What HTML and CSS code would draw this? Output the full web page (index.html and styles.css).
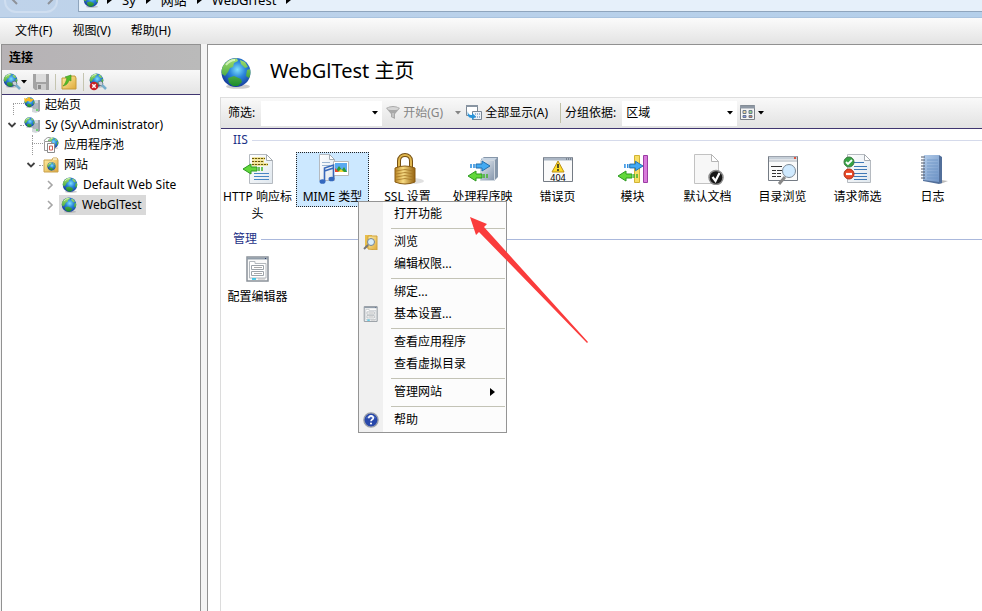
FILE: index.html
```html
<!DOCTYPE html>
<html lang="zh-CN">
<head>
<meta charset="utf-8">
<title>WebGlTest 主页</title>
<link rel="stylesheet" href="styles.css">
</head>
<body>
<svg class="sprite" aria-hidden="true">
  <defs>
    <radialGradient id="g-sea" cx=".55" cy=".4" r=".6"><stop offset="0" stop-color="#7fe0fb"/><stop offset=".45" stop-color="#2b86dc"/><stop offset="1" stop-color="#173d9c"/></radialGradient>
    <linearGradient id="g-land" x2="0" y2="1"><stop offset="0" stop-color="#a4e070"/><stop offset="1" stop-color="#1b8c2c"/></linearGradient>
    <linearGradient id="g-page" x2="1" y2="1"><stop offset="0" stop-color="#fff"/><stop offset="1" stop-color="#dfe7ee"/></linearGradient>
    <linearGradient id="g-folder" x2="1" y2="1"><stop offset="0" stop-color="#fff0a8"/><stop offset="1" stop-color="#dfa93a"/></linearGradient>
    <linearGradient id="g-gold" x2="1"><stop offset="0" stop-color="#b98422"/><stop offset=".4" stop-color="#f8dc84"/><stop offset="1" stop-color="#94600c"/></linearGradient>
    <linearGradient id="g-book" x2="1" y2="1"><stop offset="0" stop-color="#b4cdea"/><stop offset="1" stop-color="#6f94c6"/></linearGradient>
    <linearGradient id="g-metal" x2="1" y2="1"><stop offset="0" stop-color="#e9eff5"/><stop offset="1" stop-color="#8495ab"/></linearGradient>
  </defs>
  <symbol id="globe" viewBox="0 0 32 32">
    <ellipse cx="18" cy="29.500" rx="12" ry="2.300" fill="#999" opacity=".5"/>
    <circle cx="16" cy="15.500" r="14.500" fill="url(#g-sea)"/>
    <path d="M3 9C6 4 11 1 17 1.500L18 4l-4 2-1 4-3 1-2 4-3 4-3-2C1 14 2 11 3 9zM20 3l5 2 3 5-3 1-4-4zM27 13l3-1c1 4 0 7-1 9l-3-2zM8 21l6-2 7 3 1 3-4 4-5 0-4-3z" fill="url(#g-land)"/>
    <path d="M6 8q4-5 9-5" stroke="#e9ffd9" stroke-width="2" fill="none" opacity=".7"/>
  </symbol>
  <symbol id="server" viewBox="0 0 16 16">
    <path d="M8 4l3-1h5v11l-4 2-4-1z" fill="#d3d7dc"/><path d="M14 3h2v11l-2 1z" fill="#9aa2ab"/><path d="M9 7h5M9 9h5M9 11h5" stroke="#7e8893" stroke-width=".8"/>
    <circle cx="13" cy="13" r="1" fill="#50d050"/>
    <use href="#globe" width="11" height="11"/>
  </symbol>
  <symbol id="start" viewBox="0 0 16 16"><use href="#server"/><path d="M0 1l3 1 2-2 2 2 3 0-2 2-1 1-3-1-3 1z" fill="#f9b61d"/></symbol>
  <symbol id="connect" viewBox="0 0 18 18"><use href="#globe" width="15" height="15"/><path d="M9 9l3-1 2 2-1 3-3-1z" fill="#c7d0d8" stroke="#5b6c79" stroke-width=".7"/><path d="M13 12l4 4" stroke="#77aecd" stroke-width="2.500"/></symbol>
  <symbol id="disconnect" viewBox="0 0 18 18"><use href="#connect"/><circle cx="5" cy="13" r="4.300" fill="#c82126"/><path d="M3.300 11.300l3.400 3.400m0-3.400l-3.400 3.400" stroke="#fff" stroke-width="1.500"/></symbol>
  <symbol id="save" viewBox="0 0 16 16"><path d="M0 0h16v16H2l-2-2z" fill="#a3a3a3"/><path d="M3 0h10v8H3z" fill="#dcdcdc"/><path d="M4 10h9v6H4z" fill="#ccc"/><path d="M5 11h3v4H5z" fill="#8b8b8b"/></symbol>
  <symbol id="folder-up" viewBox="0 0 16 16"><path d="M1 4h8l1-2h4l1 2v11H1z" fill="url(#g-folder)" stroke="#c49a39"/><path d="M2 12c4-1 5-3 6-6l2 1 0-6-6 2 2 1c-1 4-2 6-4 8z" fill="#54bd28" stroke="#3b9420" stroke-width=".6"/></symbol>
  <symbol id="pool" viewBox="0 0 16 16"><use href="#globe" x="4" width="12" height="12"/><path d="M1.500 4.500h7v9h-7z" fill="#fff" stroke="#999"/><path d="M4.500 6.500h7v9h-7z" fill="#fff" stroke="#8b8b8b"/><path d="M6.500 9h3v4h-3z" stroke="#cc5d55" fill="none"/><path d="M1 4q3-5 7-3" fill="none" stroke="#999"/></symbol>
  <symbol id="sites" viewBox="0 0 16 16"><path d="M1 3h8l1-2h4l1 2v12H1z" fill="url(#g-folder)" stroke="#caa14c"/><path d="M10 2h4" stroke="#fff"/><use href="#globe" x="4" y="5" width="9" height="9"/></symbol>
  <symbol id="down" viewBox="0 0 6 4"><path d="M0 0h6L3 3.500z" fill="currentColor"/></symbol>
  <symbol id="right" viewBox="0 0 5 8"><path d="M0 0l5 4-5 4z" fill="currentColor"/></symbol>
  <symbol id="open" viewBox="0 0 10 10"><path d="M1.500 3L5 6.500 8.500 3" fill="none" stroke="#404040" stroke-width="1.800"/></symbol>
  <symbol id="closed" viewBox="0 0 10 10"><path d="M3 1l4 4-4 4" fill="none" stroke="#a6a6a6" stroke-width="1.600"/></symbol>
  <symbol id="funnel" viewBox="0 0 14 14"><path d="M0 2q7-4 14 0L9 8v5l-4-2V8z" fill="#a8a8a8"/><ellipse cx="7" cy="2.500" rx="5.500" ry="1.500" fill="#d6d6d6"/><path d="M7 7v4" stroke="#ddd"/></symbol>
  <symbol id="showall" viewBox="0 0 16 16"><path d="M.5.500h11v10H.5z" fill="#fff" stroke="#7c8794"/><path d="M0 1h12" stroke="#8995a2" stroke-width="2"/><path d="M6.500 6.500h9v8h-9z" fill="#eef2f7" stroke="#7c8794"/><path d="M9 9h1m1 0h1m1 0h1M9 12h1m1 0h1m1 0h1" stroke="#527dad"/><path d="M2 6c0 3 1 4 4 4V8l4 3.500L6 15v-2C2 13 1 10 2 6z" fill="#2a93d8"/></symbol>
  <symbol id="views" viewBox="0 0 16 16"><path d="M.5.500h14v14H.5z" fill="#f5f5f5" stroke="#7a8188"/><path d="M0 2h15" stroke="#8e98a4" stroke-width="3"/><path d="M3 5.500h3v3H3z" fill="#f0d8a0" stroke="#697b8d"/><path d="M9 5.500h3v3H9z" fill="#9cd48b" stroke="#697b8d"/><path d="M3 10.500h3v2H3z" fill="#8890f0" stroke="#697b8d"/><path d="M9 10.500h3v2H9z" fill="#e87c50" stroke="#697b8d"/></symbol>
  <symbol id="page" viewBox="0 0 32 32"><path d="M7.500 1.500h17l6 6v23h-23z" fill="url(#g-page)" stroke="#b5bac0"/><path d="M24.500 1.500v6h6z" fill="#fff" stroke="#a5abb1"/></symbol>
  <symbol id="arrow-l" viewBox="0 0 22 12"><path d="M1 6l8-5v3h6v4H9v3z" fill="#62d83b" stroke="#2c9a20"/><path d="M17 4v4m3-4v4" stroke="#42b52b" stroke-width="1.500"/></symbol>
  <symbol id="arrow-r" viewBox="0 0 22 12"><path d="M21 6l-8-5v3H7v4h6v3z" fill="#42aaf2" stroke="#206eae"/><path d="M5 4v4M2 4v4" stroke="#238ae0" stroke-width="1.500"/></symbol>
  <symbol id="http" viewBox="0 0 32 32"><use href="#page"/><path d="M10 5.500h13M10 8.500h12M10 11.500h16" stroke="#ecd451" stroke-width="2"/><path d="M10 5.500h13M10 8.500h12M10 11.500h16" stroke="#665611" stroke-dasharray="2 1"/><path d="M12 20.500h15M12 23.500h15M12 26.500h15" stroke="#4685c4"/><use href="#arrow-l" x="0" y="10" width="22" height="12"/></symbol>
  <symbol id="mime" viewBox="0 0 32 32"><path d="M2.500 1.500h10l5 5v21h-15z" fill="url(#g-page)" stroke="#b5bac0"/><path d="M12.500 1.500v5h5z" fill="#fff" stroke="#a5abb1"/><path d="M5 9.500h8M5 12.500h8" stroke="#9bb5d1"/><path d="M16.500 8.500h15v14h-15z" fill="#fff" stroke="#b8b8b8"/><path d="M18 10h12v9H18z" fill="#5aaaf0"/><path d="M18 19l4-6 3 4 2-3 3 5z" fill="#2d9a35"/><path d="M18 15l4 4h-4z" fill="#e9472c"/><path d="M24 16l3 3h-6z" fill="#f1d437"/><path d="M7.500 28V15l9-3v14M7.500 18l9-3" fill="none" stroke="#3768bb" stroke-width="1.600"/><ellipse cx="5.500" cy="28.500" rx="3" ry="2.300" fill="#3468be"/><ellipse cx="14.500" cy="26" rx="3" ry="2.300" fill="#3468be"/></symbol>
  <symbol id="lock" viewBox="0 0 32 32"><ellipse cx="20" cy="28" rx="12" ry="3" fill="#ccc" opacity=".6"/><path d="M7 16V8c0-8 12-8 12 0v8" fill="none" stroke="#765013" stroke-width="4"/><path d="M7 16V8c0-8 12-8 12 0v8" fill="none" stroke="#dfb64e" stroke-width="2"/><path d="M3 15q10-4 20 0v14q-10 4-20 0z" fill="url(#g-gold)" stroke="#8a5d14"/><path d="M4 18q9-3 18 0M4 21q9-3 18 0M4 24q9-3 18 0M4 27q9-3 18 0" fill="none" stroke="#a57625" stroke-width=".8"/></symbol>
  <symbol id="handler" viewBox="0 0 32 32"><path d="M14 6l3-2h14v20l-4 4H14z" fill="#8697aa"/><path d="M15 5h15l-3 3H14z" fill="#c7d4e2"/><path d="M13.500 7.500h14v20h-14z" fill="url(#g-metal)" stroke="#cfd7df"/><use href="#arrow-r" x="2" y="7" width="22" height="12"/><use href="#arrow-l" y="17" width="22" height="12"/></symbol>
  <symbol id="error" viewBox="0 0 32 32"><path d="M1.500 4.500h29v24h-29z" fill="#fafafa" stroke="#747b84"/><path d="M2 6h28" stroke="#abb6c4" stroke-width="3"/><path d="M24 6h1m1 0h1m1 0h1" stroke="#48505d"/><path d="M16 8l6 11H10z" fill="#ffdd29" stroke="#bd9116"/><path d="M16 11v4m0 1v2" stroke="#222" stroke-width="1.500"/><text x="16" y="28" class="code">404</text></symbol>
  <symbol id="module" viewBox="0 0 32 32"><path d="M17.500 2.500h5v27h-5z" fill="#f7df65" stroke="#d2b334"/><path d="M26.500 2.500h4v27h-4z" fill="#d97bdb" stroke="#9b3da4"/><use href="#arrow-r" x="6" y="7" width="21" height="12"/><use href="#arrow-l" y="17" width="22" height="12"/></symbol>
  <symbol id="doc" viewBox="0 0 32 32"><path d="M2.500 1.500h17l7 7v22h-24z" fill="#f7f7f7" stroke="#c2c2c2"/><path d="M19.500 1.500v7h7z" fill="#fff" stroke="#b5b5b5"/><circle cx="24" cy="24.500" r="7" fill="#181818" stroke="#8d8d8d" stroke-width="1.500"/><path d="M20.500 24l3 4 4-8" fill="none" stroke="#fff" stroke-width="2.200"/></symbol>
  <symbol id="browse" viewBox="0 0 32 32"><path d="M1.500 3.500h29v24h-29z" fill="#fafafa" stroke="#747b84"/><path d="M2 5h28" stroke="#c6cfd8" stroke-width="3"/><path d="M2 8h28" stroke="#a6afb9"/><path d="M4 13.500h11M5 17.500h4m1 0h5M5 20.500h4m1 0h4M5 23.500h4m1 0h4" stroke="#333"/><path d="M18 24l-6 7" stroke="#888" stroke-width="3"/><circle cx="22" cy="18" r="6.500" fill="#d0eaff" stroke="#7d8a96"/><path d="M27 5h2" stroke="#de523c" stroke-width="2"/></symbol>
  <symbol id="request" viewBox="0 0 32 32"><path d="M5.500 1.500h17l6 6v22h-23z" fill="url(#g-page)" stroke="#b5bac0"/><path d="M22.500 1.500v6h6z" fill="#fff" stroke="#a5abb1"/><path d="M12 9.500h10M12 13.500h13M12 16.500h13M12 20.500h13M12 23.500h13M12 26.500h13" stroke="#3f79b6"/><circle cx="7" cy="9" r="5" fill="#36a444" stroke="#3b7841"/><path d="M4 9l2 2 4-4" stroke="#fff" stroke-width="1.800" fill="none"/><circle cx="7" cy="21" r="5" fill="#e94825" stroke="#ae321a"/><path d="M4 21h6" stroke="#fff" stroke-width="2.200"/></symbol>
  <symbol id="log" viewBox="0 0 32 32"><path d="M24 27l7 1-8 3z" fill="#bbb"/><path d="M7 2h15l3 2v26l-3 1L6 28z" fill="#526f9a"/><path d="M7 2h15v27L6 27z" fill="url(#g-book)"/><path d="M10 7h11M10 10h11M10 13h11M10 16h11M10 19h11M10 22h11M10 25h11" stroke="#6d94c5" stroke-width=".8"/><path d="M4 4h4M4 7h4M4 10h4M4 13h4M4 16h4M4 19h4M4 22h4M4 25h4" stroke="#4c5564"/></symbol>
  <symbol id="config" viewBox="0 0 24 26"><path d="M1 1h21v24H1z" fill="#fafafa" stroke="#8a9199" stroke-width="1.500"/><path d="M1 2.500h21" stroke="#929eaa" stroke-width="2"/><path d="M3.500 22V5.500H9v2h11V22z" fill="#fff" stroke="#b3b8bd"/><path d="M5.500 9.500h12v4h-12zM5.500 15.500h12v4h-12z" fill="#fff" stroke="#9da3a9"/><path d="M8 11.500h8M8 17.500h8" stroke="#aaa"/><path d="M6 23h4" stroke="#16bce5" stroke-width="1.500"/><path d="M12 23h7" stroke="#bbb"/><path d="M19 2.500h1" stroke="#28396b"/></symbol>
  <symbol id="folder-find" viewBox="0 0 16 16"><path d="M2 1h7v13H2z" fill="#e8be4b"/><path d="M5 2h9v14l-9-1z" fill="url(#g-folder)" stroke="#d1a33c"/><path d="M5 11l-4 4" stroke="#777" stroke-width="2"/><circle cx="8" cy="8" r="3.500" fill="#d8edfa" stroke="#768593"/></symbol>
  <symbol id="help" viewBox="0 0 18 18"><circle cx="9" cy="9" r="8" fill="#2747aa" stroke="#9a9fa9" stroke-width="1.500"/><path d="M3 7q6-7 12 0" fill="#7696df" opacity=".6"/><path d="M6.500 7c0-4 5.500-3 5 0-.3 1.500-2.500 1.500-2.500 3.500" fill="none" stroke="#fff" stroke-width="1.800"/><circle cx="9" cy="13" r="1.200" fill="#fff"/></symbol>
</svg>

<header class="topbar">
  <div class="history">
    <button aria-label="后退"><svg viewBox="0 0 14 12"><path d="M7 1L2 6l5 5M2 6h11" fill="none" stroke="currentColor" stroke-width="2"/></svg></button>
    <button aria-label="前进"><svg viewBox="0 0 14 12"><path d="M7 1l5 5-5 5M12 6H1" fill="none" stroke="currentColor" stroke-width="2"/></svg></button>
  </div>
  <nav class="address">
    <svg class="i16"><use href="#globe"/></svg>
    <svg class="crumb"><use href="#right"/></svg><a href="#sy">Sy</a>
    <svg class="crumb"><use href="#right"/></svg><a href="#sites-list">网站</a>
    <svg class="crumb"><use href="#right"/></svg><a href="#site">WebGlTest</a>
    <svg class="crumb"><use href="#right"/></svg>
  </nav>
</header>
<nav class="menubar"><button>文件(F)</button><button>视图(V)</button><button>帮助(H)</button></nav>

<div class="workspace">
  <aside class="connections">
    <h2>连接</h2>
    <div class="tools">
      <button aria-label="连接"><svg class="i18"><use href="#connect"/></svg><svg class="caret"><use href="#down"/></svg></button>
      <button aria-label="保存" disabled><svg class="i16"><use href="#save"/></svg></button>
      <button class="divided" aria-label="向上"><svg class="i16"><use href="#folder-up"/></svg></button>
      <button class="divided" aria-label="断开连接"><svg class="i18"><use href="#disconnect"/></svg></button>
    </div>
    <ul class="tree">
      <li><div class="row"><span class="twig corner"></span><svg class="i16"><use href="#start"/></svg><span class="name">起始页</span></div></li>
      <li id="sy"><div class="row"><span class="twig stub"><svg><use href="#open"/></svg></span><svg class="i16"><use href="#server"/></svg><span class="name">Sy (Sy\Administrator)</span></div>
        <ul>
          <li><div class="row"><span class="twig tee"></span><svg class="i16"><use href="#pool"/></svg><span class="name">应用程序池</span></div></li>
          <li id="sites-list"><div class="row"><span class="twig stub"><svg><use href="#open"/></svg></span><svg class="i16"><use href="#sites"/></svg><span class="name">网站</span></div>
            <ul>
              <li><div class="row"><span class="twig"><svg><use href="#closed"/></svg></span><svg class="i16"><use href="#globe"/></svg><span class="name">Default Web Site</span></div></li>
              <li id="site"><div class="row"><span class="twig"><svg><use href="#closed"/></svg></span><span class="selected"><svg class="i16"><use href="#globe"/></svg><span class="name">WebGlTest</span></span></div></li>
            </ul>
          </li>
        </ul>
      </li>
    </ul>
  </aside>

  <main class="home">
    <div class="title"><svg><use href="#globe"/></svg><h1>WebGlTest 主页</h1></div>
    <div class="features">
      <div class="filterbar">
        <label for="filter">筛选:</label>
        <span class="combo"><input id="filter" type="text"><svg class="caret"><use href="#down"/></svg></span>
        <button class="go" disabled><svg class="i14"><use href="#funnel"/></svg>开始(G)<svg class="caret"><use href="#down"/></svg></button>
        <button class="all"><svg class="i16"><use href="#showall"/></svg>全部显示(A)</button>
        <label class="grouping" for="group">分组依据:</label>
        <span class="combo"><select id="group"><option>区域</option></select><svg class="caret"><use href="#down"/></svg></span>
        <button class="views" aria-label="视图"><svg class="i16"><use href="#views"/></svg><svg class="caret"><use href="#down"/></svg></button>
      </div>
      <section>
        <h3 class="pale">IIS</h3>
        <div class="grid">
          <button class="feature"><svg><use href="#http"/></svg><span>HTTP 响应标头</span></button>
          <button class="feature active"><svg><use href="#mime"/></svg><span>MIME 类型</span></button>
          <button class="feature"><svg><use href="#lock"/></svg><span>SSL 设置</span></button>
          <button class="feature"><svg><use href="#handler"/></svg><span>处理程序映射</span></button>
          <button class="feature"><svg><use href="#error"/></svg><span>错误页</span></button>
          <button class="feature"><svg><use href="#module"/></svg><span>模块</span></button>
          <button class="feature"><svg><use href="#doc"/></svg><span>默认文档</span></button>
          <button class="feature"><svg><use href="#browse"/></svg><span>目录浏览</span></button>
          <button class="feature"><svg><use href="#request"/></svg><span>请求筛选</span></button>
          <button class="feature"><svg><use href="#log"/></svg><span>日志</span></button>
        </div>
      </section>
      <section>
        <h3>管理</h3>
        <div class="grid"><button class="feature small"><svg><use href="#config"/></svg><span>配置编辑器</span></button></div>
      </section>
    </div>
  </main>
</div>

<div class="context" role="menu">
  <button role="menuitem"><i></i>打开功能</button><hr>
  <button role="menuitem"><i><svg><use href="#folder-find"/></svg></i>浏览</button>
  <button role="menuitem"><i></i>编辑权限...</button><hr>
  <button role="menuitem"><i></i>绑定...</button>
  <button role="menuitem"><i><svg><use href="#config"/></svg></i>基本设置...</button><hr>
  <button role="menuitem"><i></i>查看应用程序</button>
  <button role="menuitem"><i></i>查看虚拟目录</button><hr>
  <button role="menuitem"><i></i>管理网站<svg class="crumb"><use href="#right"/></svg></button><hr>
  <button role="menuitem"><i><svg><use href="#help"/></svg></i>帮助</button>
</div>
<svg class="pointer" viewBox="0 0 118 127" aria-hidden="true"><path d="M0 0L17 7L14 10L118 125L117 126L9 15L6 18Z" fill="#fa3c3c"/></svg>
</body>
</html>
```

FILE: styles.css
```css
* { box-sizing: border-box; }
body {
  margin: 0;
  height: 100vh;
  display: flex;
  flex-direction: column;
  overflow: hidden;
  background: #f0f0f0;
  color: #000;
  font: 12px/20px "Noto Sans", "Noto Sans CJK SC", sans-serif;
}
button, input, select { font: inherit; color: inherit; border: 0; padding: 0; margin: 0; background: none; border-radius: 0; outline: 0; }
button { display: flex; align-items: center; white-space: nowrap; }
a { color: inherit; text-decoration: none; }
svg { display: block; flex: none; }
h1, h2, h3 { margin: 0; font-size: 12px; font-weight: normal; }
ul { list-style: none; margin: 0; padding: 0; }
.sprite { position: absolute; width: 0; height: 0; }
.i14 { width: 14px; height: 14px; }
.i16 { width: 16px; height: 16px; }
.i18 { width: 18px; height: 18px; }
.caret { width: 6px; height: 4px; }
.crumb { width: 5px; height: 8px; }

.topbar { height: 18px; flex: none; display: flex; align-items: flex-end; overflow: hidden; background: linear-gradient(90deg, #bfd3ea, #b4cfea); border-bottom: 1px solid #a9c3df; }
.history { width: 54px; height: 26px; margin: 0 20px 4px 4px; padding: 0 1px 2px 4px; display: flex; justify-content: space-between; border: 2px solid #cfdef0; border-radius: 12px; color: #8e9299; }
.history svg { width: 14px; height: 12px; }
.address { flex: 1; height: 24px; margin-bottom: 5px; padding: 0 4px; display: flex; align-items: center; gap: 10px; background: #e6f0fa; border: 1px solid #8fa5bd; border-right: 0; font-size: 13px; }
.address .i16 { margin-right: -2px; }

.menubar { height: 26px; flex: none; display: flex; gap: 20px; padding-left: 15px; background: linear-gradient(#fbfbfb, #e3e3e3); }

.workspace { flex: 1; min-height: 0; display: flex; gap: 6px; padding-left: 1px; background: #f4f4f4; }
.connections { width: 200px; flex: none; background: #fff; border: 1px solid #919191; border-bottom: 0; }
.connections h2 { height: 25px; padding-left: 7px; font-weight: bold; line-height: 25px; background: linear-gradient(90deg, #b6b2b5, #bababa); }
.tools { height: 25px; display: flex; align-items: center; gap: 6px; padding-left: 1px; background: linear-gradient(#f8f8f8, #e4e4e4); border-bottom: 1px solid #3f3570; }
.tools .divided { padding-left: 5px; border-left: 1px solid #c5c5b0; }
.tree { padding-left: 2px; }
.tree ul { padding-left: 19px; }
.row { height: 20px; display: flex; align-items: center; white-space: nowrap; }
.name { padding-left: 5px; }
.twig { width: 20px; height: 20px; flex: none; display: flex; align-items: center; padding-left: 3px; }
.twig svg { width: 10px; height: 10px; }
.twig::after { content: ""; flex: 1; margin-left: 3px; }
.stub::after { border-top: 1px dotted #999; }
.corner::after, .tee::after { align-self: flex-end; height: 11px; margin-left: 6px; border-top: 1px dotted #999; border-left: 1px dotted #999; }
.tee::before { content: ""; align-self: flex-start; height: 10px; margin: 0 -7px 0 6px; border-left: 1px dotted #999; }
.selected { display: flex; align-items: center; height: 20px; margin-left: -3px; padding: 0 4px 0 2px; background: #d9d9d9; }

.home { flex: 1; min-width: 0; display: flex; flex-direction: column; padding-left: 12px; background: #fff; border: 1px solid #919191; border-width: 1px 0 0 1px; }
.title { display: flex; align-items: center; gap: 18px; height: 52px; }
.title svg { width: 32px; height: 32px; margin-top: 4px; }
.title h1 { font-size: 20px; line-height: 28px; }
.features { flex: 1; border-left: 1px solid #dcdcdc; }
.filterbar { height: 32px; display: flex; align-items: center; padding-left: 7px; white-space: nowrap; background: linear-gradient(#f9f9f9, #e2e2e2); border-top: 1px solid #dedede; border-bottom: 1px solid #3f3570; }
.combo { display: flex; align-items: center; width: 121px; height: 25px; margin-left: 6px; padding-right: 4px; background: #fff; }
.combo input, .combo select { flex: 1; min-width: 0; height: 24px; padding-left: 4px; appearance: none; }
.go { gap: 3px; margin-left: 4px; color: #858585; }
.go .caret { margin-left: 9px; }
.all { gap: 3px; margin-left: 5px; }
.grouping { margin-left: 12px; padding-left: 4px; border-left: 1px solid #c0c0a8; }
.grouping + .combo { width: 115px; }
.views { gap: 2px; margin-left: 3px; }

h3 { display: flex; align-items: center; gap: 4px; padding-left: 12px; line-height: 22px; color: #1e3287; }
h3::after { content: ""; flex: 1; border-top: 1px solid #aab8dc; }
h3.pale::after { border-color: #d5daeb; }
.grid { display: flex; flex-wrap: wrap; padding-bottom: 4px; }
.feature { width: 73px; min-height: 55px; margin: 1px 2px 1px 0; flex-direction: column; border: 1px solid transparent; }
.feature svg { width: 32px; height: 32px; }
.feature span { width: 71px; line-height: 17px; margin-top: 3px; white-space: normal; text-align: center; }
.feature.active { align-self: flex-start; background: #cce8ff; border: 1px dotted #222; }
.feature.small svg { width: 24px; height: 26px; margin: 4px 0 3px; }
.code { font: 9px "Noto Sans", sans-serif; text-anchor: middle; }

.context { position: absolute; left: 358px; top: 201px; width: 149px; padding: 1px 1px 1px 0; border: 1px solid #949494; background: linear-gradient(90deg, #f0f0f0 24px, #fcfcfc 24px); }
.context button { width: 100%; height: 22px; }
.context i { width: 24px; margin-right: 11px; display: flex; justify-content: center; }
.context i svg { width: 16px; height: 16px; }
.context hr { height: 1px; margin: 3px 0 2px 32px; border: 0; background: #c3c3b6; }
.context .crumb { margin-left: auto; margin-right: 10px; }
.pointer { position: absolute; left: 470px; top: 217px; width: 118px; height: 127px; }
```
